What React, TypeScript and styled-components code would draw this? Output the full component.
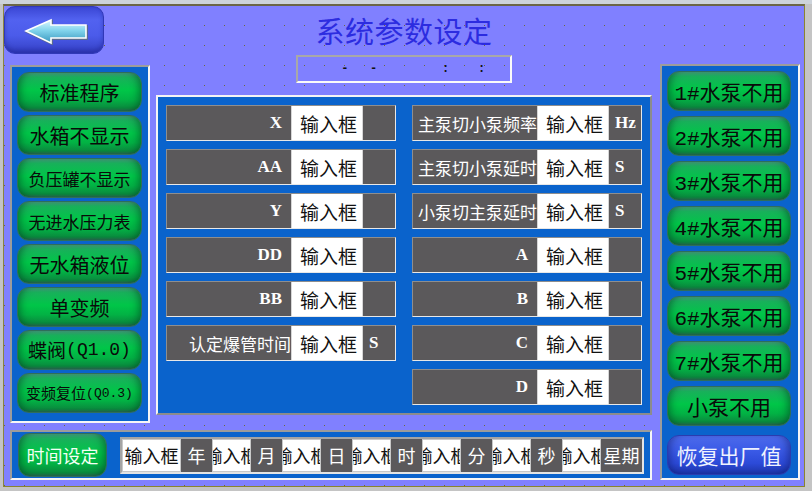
import React from "react";
import styled, { createGlobalStyle } from "styled-components";

const GlobalStyle = createGlobalStyle`
  html, body {
    margin: 0;
    padding: 0;
    background: #c4c4c4;
  }
  body {
    width: 812px;
    height: 491px;
    overflow: hidden;
    font-family: "Liberation Mono", "Noto Sans CJK SC", monospace;
  }
  * {
    box-sizing: border-box;
  }
`;

const CJK = `"Liberation Mono", "Noto Sans CJK SC", monospace`;

const Screen = styled.div`
  width: 812px;
  height: 491px;
  background: #c4c4c4;
  border-top: 4px solid #cdd3da;
`;

// the HMI canvas with its dotted grid
const Canvas = styled.div`
  width: 802px;
  height: 483px;
  margin-left: 3px;
  display: flex;
  background-color: #8080ff;
  background-image: conic-gradient(from 0deg at 1px 1px, transparent 270deg, #6e6a3a 270deg);
  background-size: 20px 20px;
  background-position: 0 19px;
  border-style: solid;
  border-width: 2px 1px 1px 1px;
  border-color: #6b6646 #8a8430 #8a8430 #8a8440;
`;

const MainCol = styled.div`
  width: 648px;
  display: flex;
  flex-direction: column;
`;

const TopRow = styled.div`
  height: 49px;
  display: flex;
  align-items: flex-start;
`;

const BackButton = styled.button`
  width: 100px;
  height: 48px;
  padding: 2px 0 0 4px;
  display: flex;
  align-items: center;
  justify-content: center;
  border: 1px solid #3038b8;
  border-radius: 11px;
  background: linear-gradient(180deg, #3a46d4 0%, #5262f0 28%, #4b5bea 62%, #3440c4 100%);
  box-shadow: inset 0 -3px 4px rgba(20, 20, 120, 0.35);
`;

const Title = styled.h1`
  width: 216px;
  margin: 0 0 0 192px;
  line-height: 48px;
  text-align: center;
  font-family: "Noto Sans CJK SC", sans-serif;
  font-weight: 400;
  font-size: 29px;
  letter-spacing: 0.5px;
  color: #2c2ce0;
`;

const BodyRow = styled.div`
  display: flex;
  align-items: flex-start;
  height: 368px;
`;

const Panel = styled.div<{ $raised?: boolean }>`
  background: #0a63cc;
  border: 2px solid;
  border-color: ${p => (p.$raised ? "#f4f4f4 #8c8c8c #8c8c8c #f4f4f4" : "#9c9c9c #f6f6f6 #f6f6f6 #9c9c9c")};
`;

const LeftPanel = styled(Panel)`
  width: 140px;
  height: 358px;
  margin: 10px 0 0 6px;
  padding: 5px 0 0 5px;
  display: flex;
  flex-direction: column;
  gap: 3px;
`;

const CenterStack = styled.div`
  margin-left: 6px;
  width: 496px;
  display: flex;
  flex-direction: column;
`;

const DateBox = styled.div`
  width: 216px;
  height: 28px;
  margin-left: 140px;
  border: 2px solid;
  border-color: #a8a8a8 #fafafa #fafafa #a8a8a8;
  font-family: "Liberation Mono", monospace;
  font-size: 12px;
  font-weight: 700;
  line-height: 24px;
  white-space: pre;
  color: #111;
`;

const CenterPanel = styled(Panel)`
  width: 496px;
  height: 320px;
  margin-top: 12px;
  padding: 8px;
  display: grid;
  grid-template-columns: 230px 230px;
  column-gap: 16px;
  align-items: start;
`;

const FieldColumn = styled.div`
  display: flex;
  flex-direction: column;
  gap: 8px;
`;

const FieldRow = styled.div`
  height: 36px;
  display: grid;
  grid-template-columns: 124px 72px 1fr;
  border: 1px solid;
  border-color: #8e8e8e #e8e8e8 #e8e8e8 #8e8e8e;
`;

const FieldLabel = styled.div<{ $ascii?: boolean }>`
  background: #5b595b;
  color: #fff;
  display: flex;
  align-items: center;
  justify-content: flex-end;
  white-space: nowrap;
  overflow: hidden;
  padding-right: ${p => (p.$ascii ? "9px" : "0")};
  font-family: ${p => (p.$ascii ? `"Liberation Serif", serif` : `"Noto Sans CJK SC", sans-serif`)};
  font-size: 17px;
  font-weight: ${p => (p.$ascii ? 700 : 400)};
`;

const FieldInput = styled.div`
  background: #fff;
  border-left: 1px solid #d6d6d6;
  border-right: 1px solid #d6d6d6;
  display: flex;
  align-items: center;
  justify-content: center;
  padding-left: 3px;
  font-family: "Noto Sans CJK SC", sans-serif;
  font-size: 19px;
  color: #111;
`;

const FieldUnit = styled.div`
  background: #5b595b;
  color: #fff;
  display: flex;
  align-items: center;
  padding-left: 6px;
  font-family: "Liberation Serif", serif;
  font-weight: 700;
  font-size: 17px;
`;

const BottomPanel = styled(Panel)`
  width: 642px;
  height: 50px;
  margin: 7px 0 0 6px;
  padding-left: 6px;
  display: flex;
  align-items: center;
`;

const GreenButton = styled.button<{ $size?: number; $width?: number; $height?: number; $light?: boolean }>`
  width: ${p => p.$width ?? 125}px;
  height: ${p => p.$height ?? 40}px;
  flex: none;
  padding: 0;
  border: 1px solid #2f6e5a;
  border-radius: 12px;
  background: linear-gradient(180deg, #3f9a78 0%, #18b05a 12%, #00c648 45%, #02b244 70%, #0a8a3e 92%, #26664e 100%);
  box-shadow: inset 8px 0 8px -6px rgba(0, 50, 30, 0.55), inset -8px 0 8px -6px rgba(0, 50, 30, 0.55);
  color: ${p => (p.$light ? "#f4fff4" : "#0a0a0a")};
  font-family: ${CJK};
  font-size: ${p => p.$size ?? 20}px;
  white-space: nowrap;
  display: flex;
  align-items: center;
  justify-content: center;
`;

const BlueButton = styled(GreenButton)`
  margin-top: 4px;
  border-color: #2a3cb0;
  background: linear-gradient(180deg, #4c6aea 0%, #3c5ce8 35%, #2c4ad8 72%, #1c34a6 100%);
  box-shadow: inset 8px 0 8px -6px rgba(10, 20, 90, 0.5), inset -8px 0 8px -6px rgba(10, 20, 90, 0.5);
  color: #eef2ff;
`;

const Ascii = styled.span<{ $size: number }>`
  font-family: "Liberation Mono", monospace;
  font-size: ${p => p.$size}px;
`;

const DateFields = styled.div`
  width: 524px;
  height: 37px;
  margin-left: 13px;
  border: 2px solid;
  border-color: #a4a4a4 #e4e4e4 #e4e4e4 #a4a4a4;
  display: grid;
  grid-template-columns: 59px 31px 39px 31px 39px 31px 39px 31px 39px 31px 39px 31px 39px 41px;
`;

const DateInput = styled.div`
  min-width: 0;
  background: #fff;
  border: 1px solid #c8c8c8;
  overflow: hidden;
  text-align: center;
  white-space: nowrap;
  line-height: 31px;
  font-family: "Noto Sans CJK SC", sans-serif;
  font-size: 18px;
  color: #111;
`;

// negative side margins let the text spill evenly out of a narrow cell, so it is cut on both sides
const DateInputText = styled.span`
  display: inline-block;
  margin: 0 -12px;
`;

const DateUnit = styled.div`
  min-width: 0;
  background: #5b595b;
  color: #fff;
  display: flex;
  align-items: center;
  justify-content: center;
  white-space: nowrap;
  font-family: "Noto Sans CJK SC", sans-serif;
  font-size: 18px;
`;

const RightPanel = styled(Panel)`
  width: 140px;
  height: 416px;
  margin: 58px 0 0 8px;
  padding: 5px 0 0 5px;
  display: flex;
  flex-direction: column;
  gap: 5px;
`;

const BackArrow = () => (
  <svg width="66" height="28" viewBox="0 0 66 28">
    <defs>
      <linearGradient id="arrowFill" x1="0" y1="0" x2="0" y2="1">
        <stop offset="0" stopColor="#dcf7ff" />
        <stop offset="0.45" stopColor="#82d4ec" />
        <stop offset="1" stopColor="#3796be" />
      </linearGradient>
    </defs>
    <path d="M3 14 L28 3 L28 8 L63 8 L63 21 L28 21 L28 26 Z" fill="none" stroke="#5a6a90" strokeWidth="2" transform="translate(1 1)" />
    <path d="M3 14 L28 3 L28 8 L63 8 L63 21 L28 21 L28 26 Z" fill="url(#arrowFill)" stroke="#ffffff" strokeWidth="1.6" />
  </svg>
);

type Field = { label: string; unit?: string; ascii?: boolean };

const leftFields: Field[] = [
  { label: "X", ascii: true },
  { label: "AA", ascii: true },
  { label: "Y", ascii: true },
  { label: "DD", ascii: true },
  { label: "BB", ascii: true },
  { label: "认定爆管时间", unit: "S" },
];

const rightFields: Field[] = [
  { label: "主泵切小泵频率", unit: "Hz" },
  { label: "主泵切小泵延时", unit: "S" },
  { label: "小泵切主泵延时", unit: "S" },
  { label: "A", ascii: true },
  { label: "B", ascii: true },
  { label: "C", ascii: true },
  { label: "D", ascii: true },
];

const pumps = ["1#水泵不用", "2#水泵不用", "3#水泵不用", "4#水泵不用", "5#水泵不用", "6#水泵不用", "7#水泵不用", "小泵不用"];

const dateUnits = ["年", "月", "日", "时", "分", "秒", "星期"];

const FieldList = ({ fields }: { fields: Field[] }) => (
  <FieldColumn>
    {fields.map(f => (
      <FieldRow key={f.label}>
        <FieldLabel $ascii={f.ascii}>{f.label}</FieldLabel>
        <FieldInput>输入框</FieldInput>
        <FieldUnit>{f.unit}</FieldUnit>
      </FieldRow>
    ))}
  </FieldColumn>
);

const App = () => {
  return (
    <Screen>
      <GlobalStyle />
      <Canvas>
        <MainCol>
          <TopRow>
            <BackButton>
              <BackArrow />
            </BackButton>
            <Title>系统参数设定</Title>
          </TopRow>
          <BodyRow>
            <LeftPanel>
              <GreenButton>标准程序</GreenButton>
              <GreenButton>水箱不显示</GreenButton>
              <GreenButton $size={17}>负压罐不显示</GreenButton>
              <GreenButton $size={17}>无进水压力表</GreenButton>
              <GreenButton>无水箱液位</GreenButton>
              <GreenButton>单变频</GreenButton>
              <GreenButton $size={19}>
                蝶阀<Ascii $size={18}>(Q1.0)</Ascii>
              </GreenButton>
              <GreenButton $size={15}>
                变频复位<Ascii $size={13}>(Q0.3)</Ascii>
              </GreenButton>
            </LeftPanel>
            <CenterStack>
              <DateBox>{"      -   -         :    :"}</DateBox>
              <CenterPanel $raised>
                <FieldList fields={leftFields} />
                <FieldList fields={rightFields} />
              </CenterPanel>
            </CenterStack>
          </BodyRow>
          <BottomPanel>
            <GreenButton $width={89} $height={44} $size={18} $light>
              时间设定
            </GreenButton>
            <DateFields>
              {dateUnits.map(u => (
                <React.Fragment key={u}>
                  <DateInput>
                    <DateInputText>输入框</DateInputText>
                  </DateInput>
                  <DateUnit>{u}</DateUnit>
                </React.Fragment>
              ))}
            </DateFields>
          </BottomPanel>
        </MainCol>
        <RightPanel>
          {pumps.map(p => (
            <GreenButton key={p} $width={124} $size={21}>
              {p}
            </GreenButton>
          ))}
          <BlueButton $width={124} $size={21}>
            恢复出厂值
          </BlueButton>
        </RightPanel>
      </Canvas>
    </Screen>
  );
};

export default App;
